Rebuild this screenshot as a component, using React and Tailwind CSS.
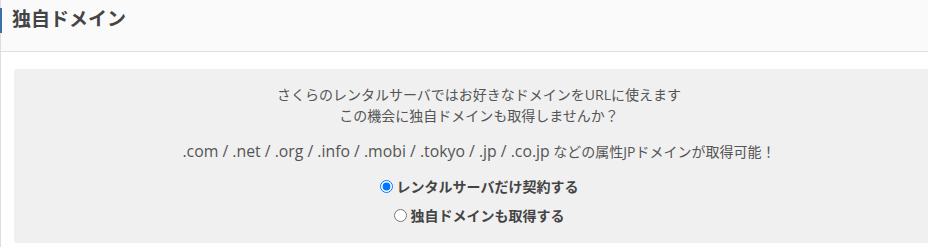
import React, { useState } from "react";

const font = { fontFamily: '"Open Sans", "Noto Sans CJK JP", "Noto Sans", sans-serif' };

export default function App() {
  const [choice, setChoice] = useState("server");

  return (
    <div className="w-[928px] h-[247px] overflow-hidden bg-white text-[#444]" style={font}>
      <div className="border-l border-[#dddddd] h-full">
        {/* ヘッダー */}
        <div className="h-[52px] bg-[#fafafa] border-b border-[#e0e0e0] relative">
          <span className="absolute left-[-1px] top-[8px] w-[2px] h-[25px] bg-[#3b6fa8]" />
          <h2 className="pl-[11px] pt-[5px] text-[19px] font-bold leading-[28px] text-[#444]">独自ドメイン</h2>
        </div>

        {/* ドメイン案内 */}
        <div className="mt-[17px] ml-[13px] mr-[-16px] h-[174px] bg-[#f0f0f0] rounded-[3px] text-center pt-[15px]">
          <p className="text-[14px] leading-[21px] text-[#555]">
            さくらのレンタルサーバではお好きなドメインをURLに使えます
            <br />
            この機会に独自ドメインも取得しませんか？
          </p>
          <p className="mt-[15px] text-[14px] leading-[21px] text-[#555]">
            <span className="text-[15.8px]">.com / .net / .org / .info / .mobi / .tokyo / .jp / .co.jp</span> などの属性JPドメインが取得可能！
          </p>
          <div className="mt-[14px] flex flex-col items-center gap-[8px] text-[14px] font-bold text-[#444]">
            <label className="flex items-center gap-[4px] leading-[21px] cursor-pointer">
              <input
                type="radio"
                name="domain"
                checked={choice === "server"}
                onChange={() => setChoice("server")}
                className="w-[13px] h-[13px] accent-[#0075ff]"
              />
              レンタルサーバだけ契約する
            </label>
            <label className="flex items-center gap-[4px] leading-[21px] cursor-pointer">
              <input
                type="radio"
                name="domain"
                checked={choice === "domain"}
                onChange={() => setChoice("domain")}
                className="w-[13px] h-[13px] accent-[#0075ff]"
              />
              独自ドメインも取得する
            </label>
          </div>
        </div>
      </div>
    </div>
  );
}
